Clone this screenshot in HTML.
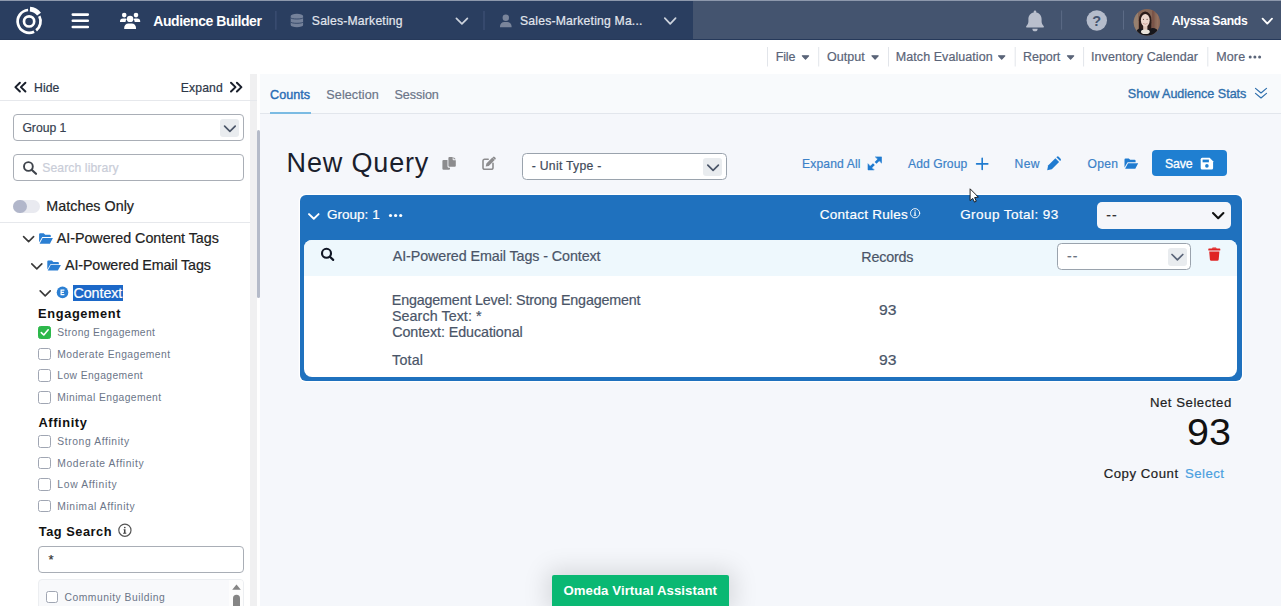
<!DOCTYPE html>
<html><head><meta charset="utf-8">
<style>
*{box-sizing:border-box;margin:0;padding:0}
html,body{width:1281px;height:606px;overflow:hidden;background:#fff;font-family:"Liberation Sans",sans-serif;color:#1f2937}
.a{position:absolute}
.t{position:absolute;white-space:pre;-webkit-text-stroke:0.2px currentColor}
svg{position:absolute;left:0;top:0;overflow:visible}
.cb{position:absolute;width:12.5px;height:12.5px;border:1.1px solid #a0a6b3;border-radius:2.5px;background:#fff}
</style></head><body>
<!-- NAV -->
<div class="a" style="left:0;top:0;width:692.5px;height:40px;background:#2a3e60"></div>
<div class="a" style="left:692.5px;top:0;width:588.5px;height:40px;background:#44546f"></div>
<div class="a" style="left:0;top:0;width:1281px;height:1px;background:#8d98ac"></div>
<div class="a" style="left:0;top:39px;width:1281px;height:1px;background:#26395a"></div>
<!-- MENU BAR -->
<div class="a" style="left:0;top:40px;width:1281px;height:34px;background:#fff"></div>
<!-- SIDEBAR -->
<div class="a" style="left:0;top:74px;width:250px;height:532px;background:#fff"></div>
<div class="a" style="left:250px;top:74px;width:6.5px;height:532px;background:#f0f0f1"></div>
<div class="a" style="left:256.5px;top:74px;width:3.5px;height:532px;background:#fff"></div>
<div class="a" style="left:256.5px;top:129.7px;width:3.5px;height:168.7px;background:#b5bbc9;border-radius:1.5px"></div>
<div class="a" style="left:0;top:100px;width:256.5px;height:1px;background:#e6e8ec"></div>
<div class="a" style="left:0;top:222px;width:250px;height:1px;background:#e6e8ec"></div>
<!-- MAIN BG -->
<div class="a" style="left:260px;top:74px;width:1021px;height:39px;background:#f8fafc"></div>
<div class="a" style="left:260px;top:113px;width:1021px;height:493px;background:#f5f7fb"></div>
<div class="a" style="left:260px;top:112.6px;width:1021px;height:1px;background:#e2e6ec"></div>
<div class="a" style="left:270px;top:112px;width:40.8px;height:2px;background:#7bbbe3"></div>

<!-- sidebar controls -->
<div class="a" style="left:13.2px;top:114.2px;width:230.5px;height:26.8px;border:1px solid #a9aeb6;border-radius:4px;background:#fff"></div>
<div class="a" style="left:220px;top:119px;width:19px;height:17.5px;background:#e9ecef;border-radius:3px"></div>
<div class="a" style="left:13.2px;top:154px;width:230.5px;height:26.8px;border:1px solid #a9aeb6;border-radius:4px;background:#fff"></div>
<div class="a" style="left:13.2px;top:199.9px;width:26.6px;height:13.4px;border-radius:6.7px;background:#e9eaf0"></div>
<div class="a" style="left:13.2px;top:199.9px;width:13.4px;height:13.4px;border-radius:50%;background:#b1b6ca"></div>
<div class="a" style="left:73.3px;top:285px;width:49.4px;height:15.6px;background:#1c68c8"></div>
<!-- checkboxes -->
<div class="cb" style="left:38.4px;top:326px;background:#2db84b;border-color:#2db84b"></div>
<div class="cb" style="left:38.4px;top:347.9px"></div>
<div class="cb" style="left:38.4px;top:369.2px"></div>
<div class="cb" style="left:38.4px;top:391.1px"></div>
<div class="cb" style="left:38.4px;top:435.2px"></div>
<div class="cb" style="left:38.4px;top:456.6px"></div>
<div class="cb" style="left:38.4px;top:478px"></div>
<div class="cb" style="left:38.4px;top:499.8px"></div>
<div class="a" style="left:38.4px;top:546.2px;width:205.4px;height:26.5px;border:1px solid #a9aeb6;border-radius:4px;background:#fff"></div>
<div class="a" style="left:38.4px;top:579.3px;width:205.4px;height:40px;border:1px solid #eceef1;border-radius:4px;background:#f8f9fb;overflow:hidden"><div style="position:absolute;right:0;top:0;width:14px;height:40px;background:#fdfdfd"></div></div>
<div class="cb" style="left:45.9px;top:590.9px"></div>

<!-- main controls -->
<div class="a" style="left:522.2px;top:153.1px;width:204.6px;height:26.8px;border:1px solid #9aa3ad;border-radius:4.5px;background:#fff"></div>
<div class="a" style="left:703px;top:157.8px;width:19.3px;height:17.8px;background:#e9ecef;border-radius:3px"></div>
<div class="a" style="left:1151.7px;top:150.3px;width:75.8px;height:26.2px;background:#1f7fd1;border-radius:4px"></div>
<!-- group panel -->
<div class="a" style="left:299.8px;top:195.3px;width:942.4px;height:185.3px;background:#1f71be;border-radius:6px;box-shadow:0 0 0 1.3px #fff"></div>
<div class="a" style="left:304.3px;top:240px;width:933.2px;height:136.5px;background:#fff;border-radius:8px;overflow:hidden"><div style="height:35.8px;background:#eef8fd"></div></div>
<div class="a" style="left:1097.2px;top:202px;width:134px;height:26.6px;background:#f5f6fa;border-radius:5px"></div>
<div class="a" style="left:1057.2px;top:243.2px;width:134px;height:26.7px;border:1px solid #9aa3ad;border-radius:4.5px;background:#fff"></div>
<div class="a" style="left:1167.6px;top:247.5px;width:19.2px;height:18.4px;background:#e9ecef;border-radius:3px"></div>
<!-- green button -->
<div class="a" style="left:552.2px;top:575px;width:176.7px;height:31px;background:#0ab873;border-radius:2px 2px 0 0;box-shadow:0 0 24px 5px rgba(0,0,0,.13)"></div>

<svg width="1281" height="606" viewBox="0 0 1281 606" fill="none" stroke-linecap="round" stroke-linejoin="round">
<!-- nav separators -->
<g stroke="#43557a" stroke-width="1" stroke-linecap="butt"><path d="M275.9,11V29.7M484,10.9V30"/></g>
<g stroke="#5c6b86" stroke-width="1" stroke-linecap="butt"><path d="M1061.6,10.5V29.6M1123.5,10.5V29.6"/></g>
<!-- logo -->
<g stroke="#fff" stroke-linecap="butt">
<circle cx="29.1" cy="21.4" r="5.1" stroke-width="2.65"/>
<path d="M34.12,31.69 A11.45,11.45 0 1 1 28.10,9.99" stroke-width="2.7"/>
<path d="M39.30,16.20 A11.45,11.45 0 0 1 36.15,30.42" stroke-width="2.7"/>
<path d="M29.96,9.13 A12.3,12.3 0 0 1 39.05,14.17" stroke-width="4.7"/>
</g>
<!-- hamburger -->
<path d="M72.8,14.6H87.8M72.8,20.8H87.8M72.8,27H87.8" stroke="#fff" stroke-width="2.6"/>
<!-- users -->
<g fill="#fff" stroke="none">
<circle cx="130.1" cy="18.9" r="3.2"/>
<path d="M124.2,28.9v-1.2a4.2,4.2 0 0 1 4.2,-4.3h3.4a4.2,4.2 0 0 1 4.2,4.3v1.2z"/>
<circle cx="124.2" cy="15.1" r="2.3"/><circle cx="136" cy="15.1" r="2.3"/>
<path d="M120,21.9v-0.6a2.9,2.9 0 0 1 2.9,-2.9h2.4a2.9,2.9 0 0 1 1.6,0.5a4.6,4.6 0 0 0 -1.4,3z"/>
<path d="M140.2,21.9v-0.6a2.9,2.9 0 0 0 -2.9,-2.9h-2.4a2.9,2.9 0 0 0 -1.6,0.5a4.6,4.6 0 0 1 1.4,3z"/>
</g>
<!-- db icon -->
<path d="M290.7,16.1v8.8a6.2,2.4 0 0 0 12.4,0v-8.8a6.2,2.4 0 0 0 -12.4,0z" fill="#74819a" stroke="none"/>
<path d="M290.7,17.7a6.2,1.3 0 0 0 12.4,0M290.7,22a6.2,1.3 0 0 0 12.4,0" stroke="#2a3e60" stroke-width="0.8" stroke-linecap="butt"/>
<!-- nav chevrons -->
<g stroke="#cdd3dd" stroke-width="1.7">
<path d="M456.4,18.4L461.9,23.9L467.4,18.4"/>
<path d="M664.8,18.2L670.2,23.8L675.6,18.2"/>
</g>
<path d="M1262.6,18.6L1267.3,23.6L1272,18.6" stroke="#fff" stroke-width="1.8"/>
<!-- user icon -->
<g fill="#7a859b" stroke="none"><circle cx="505.8" cy="17.8" r="3.2"/>
<path d="M500,27.2v-1a4.3,4.3 0 0 1 4.3,-4.3h3a4.3,4.3 0 0 1 4.3,4.3v1z"/></g>
<!-- bell -->
<g fill="#b9bfcd" stroke="none" transform="translate(0,0.5)">
<path d="M1035,10a1.3,1.3 0 0 1 1.3,1.3v0.8c3.2,0.6 5.3,3.3 5.3,6.6v2.4c0,1.8 0.9,3.2 2,4.3c0.6,0.6 0.3,1.7 -0.7,1.7h-15.8c-1,0 -1.3,-1.1 -0.7,-1.7c1.1,-1.1 2,-2.5 2,-4.3v-2.4c0,-3.3 2.1,-6 5.3,-6.6v-0.8a1.3,1.3 0 0 1 1.3,-1.3z"/>
<path d="M1032.4,28.2h5.2a2.6,2.6 0 0 1 -5.2,0z"/>
</g>
<!-- help -->
<circle cx="1096.8" cy="20.5" r="10.2" fill="#b5bccb" stroke="none"/>
<text x="1096.8" y="25.6" text-anchor="middle" font-family="Liberation Sans" font-weight="700" font-size="14.5" fill="#44546f" stroke="none">?</text>
<!-- avatar -->
<clipPath id="av"><circle cx="1146.9" cy="22.3" r="13.2"/></clipPath>
<g clip-path="url(#av)" stroke="none">
<rect x="1133" y="8" width="28" height="29" fill="#876757"/>
<rect x="1133" y="8" width="5" height="29" fill="#96806f"/>
<rect x="1152" y="8" width="2.5" height="29" fill="#7a5448"/>
<rect x="1156.5" y="8" width="2" height="29" fill="#94705f"/>
<ellipse cx="1145.2" cy="20.2" rx="6.3" ry="8.8" fill="#2a1b19"/>
<rect x="1139" y="20" width="12.4" height="10.5" rx="2" fill="#2a1b19"/>
<path d="M1135,37L1137,30Q1140,27.8 1141.5,29H1150Q1152.5,26.8 1157,29.5L1160,37z" fill="#17171c"/>
<rect x="1143.2" y="25" width="4.2" height="6" fill="#dcc3b8"/>
<ellipse cx="1145.4" cy="31.8" rx="4.4" ry="2.3" fill="#e9e3da"/>
<ellipse cx="1145.3" cy="20.2" rx="4.4" ry="6.3" fill="#ecd6cc"/>
<path d="M1143.3,23.6Q1145.3,25.2 1147.3,23.6" stroke="#c48f88" stroke-width="0.7" fill="none"/>
<circle cx="1143.5" cy="19.3" r="0.6" fill="#5a4038"/><circle cx="1147.1" cy="19.3" r="0.6" fill="#5a4038"/>
</g>
<!-- menu separators -->
<path d="M767.5,47V66.5M818.7,47V66.5M888.5,47V66.5M1015.2,47V66.5M1083.6,47V66.5M1207.8,47V66.5" stroke="#e2e5ea" stroke-width="1" stroke-linecap="butt"/>
<!-- menu carets -->
<g fill="#5a6478" stroke="#5a6478" stroke-width="1.2">
<path d="M802.4,55.8h6.2l-3.1,3.4z"/><path d="M872,55.8h6.2l-3.1,3.4z"/><path d="M998.6,55.8h6.2l-3.1,3.4z"/><path d="M1067.5,55.8h6.2l-3.1,3.4z"/>
</g>
<g fill="#5a6478" stroke="none"><circle cx="1250.2" cy="57" r="1.5"/><circle cx="1254.9" cy="57" r="1.5"/><circle cx="1259.6" cy="57" r="1.5"/></g>
<!-- double chevron -->
<path d="M1255.5,88.4L1261,93L1266.5,88.4M1255.5,93.4L1261,98L1266.5,93.4" stroke="#2f6fad" stroke-width="1.2"/>
<!-- hide / expand -->
<path d="M19.9,82.7L15.4,87.1L19.9,91.5M25.4,82.7L20.9,87.1L25.4,91.5M231,82.7L235.5,87.1L231,91.5M236.9,82.7L241.4,87.1L236.9,91.5" stroke="#1a202c" stroke-width="2"/>
<!-- select chevrons -->
<path d="M224.6,126.2L229.9,131.3L235.2,126.2" stroke="#4a5568" stroke-width="1.7"/>
<path d="M707.8,165.2L713.1,170.4L718.4,165.2" stroke="#4a5568" stroke-width="1.7"/>
<path d="M1172,254.5L1177.4,259.8L1182.8,254.5" stroke="#5a6478" stroke-width="1.7"/>
<path d="M1213,213L1218.2,218.2L1223.4,213" stroke="#111" stroke-width="2.1"/>
<!-- sidebar search -->
<circle cx="28.4" cy="166.5" r="4.4" stroke="#3f444c" stroke-width="1.9"/><path d="M31.9,170L36,173.8" stroke="#3f444c" stroke-width="2.2"/>
<!-- tree chevrons -->
<path d="M23.6,236.6L28.6,241.6L33.6,236.6M31.8,263.9L36.8,268.9L41.8,263.9M40.2,290.9L45.2,295.9L50.2,290.9" stroke="#3a3a3a" stroke-width="1.6"/>
<!-- folders -->
<g fill="#2b7fd3" stroke="none">
<path d="M39.1,242.6v-8.3a1,1 0 0 1 1,-1h3.6l1.5,1.5h4.6a1,1 0 0 1 1,1v1.3h-8.6l-3.1,5.5z"/>
<path d="M42.6,238h10.3l-3,5.7h-10.3z"/>
<path d="M47.3,269.6v-8.2a1,1 0 0 1 1,-1h3.6l1.5,1.5h4.5a1,1 0 0 1 1,1v1.3h-8.5l-3.1,5.4z"/>
<path d="M50.7,265h10.2l-3,5.6h-10.2z"/>
</g>
<!-- E icon -->
<circle cx="62.5" cy="292.4" r="5.8" fill="#2b7fd3" stroke="none"/>
<path d="M64.4,290.2h-3.3v4.5h3.3M61.1,292.4h2.8" stroke="#fff" stroke-width="1.2" stroke-linecap="butt" stroke-linejoin="miter"/>
<!-- check -->
<path d="M41.3,332.6L43.8,335L48.2,329.8" stroke="#fff" stroke-width="1.6"/>
<!-- info (tag search) -->
<circle cx="124.9" cy="530.2" r="6.1" stroke="#555" stroke-width="1.2"/>
<g fill="#444" stroke="none"><circle cx="124.8" cy="527.5" r="0.85"/><path d="M123.6,529.3h1.9v3.5h0.8v0.9h-3.2v-0.9h0.9v-2.6h-0.4z"/></g>
<!-- list scrollbar -->
<g fill="#858585" stroke="none"><path d="M232.2,589.7L236.5,584.6L240.8,589.7z"/><rect x="233" y="594.8" width="7" height="14" rx="3.5"/></g>
<!-- copy icon -->
<g stroke="none">
<rect x="442.4" y="160" width="7.6" height="9.8" rx="1.1" fill="#8c8c8e"/>
<path d="M447.5,157.2a1.1,1.1 0 0 1 1.1,-1.1h4.9l3.2,3.2v7.3a1.1,1.1 0 0 1 -1.1,1.1h-7a1.1,1.1 0 0 1 -1.1,-1.1z" fill="#f5f7fb"/>
<path d="M448.4,158a1,1 0 0 1 1,-1h3.3v2.4a0.8,0.8 0 0 0 0.8,0.8h2.3v5.5a1,1 0 0 1 -1,1h-5.4a1,1 0 0 1 -1,-1z" fill="#8c8c8e"/>
<path d="M453.5,157l2.3,2.3h-2.3z" fill="#8c8c8e"/>
</g>
<!-- edit icon -->
<path d="M488.2,159.3h-3.6a1.6,1.6 0 0 0 -1.6,1.6v6.8a1.6,1.6 0 0 0 1.6,1.6h6.8a1.6,1.6 0 0 0 1.6,-1.6v-4.4" stroke="#8c8c8e" stroke-width="1.6"/>
<path d="M485.7,166.6l0.7,-3.1l5.9,-5.9l2.4,2.4l-5.9,5.9zM493.1,156.9a1.1,1.1 0 0 1 1.5,0l0.9,0.9a1.1,1.1 0 0 1 0,1.5l-0.5,0.5l-2.4,-2.4z" fill="#8c8c8e" stroke="none"/>
<!-- expand icon -->
<g fill="#1f7bd0" stroke="#1f7bd0" stroke-width="0.6"><path d="M875.7,156.9h5.8v5.8zM868,164.1v5.8h5.8z"/></g>
<path d="M879.6,158.8L875.6,162.8M869.9,168.1L873.9,164.1" stroke="#1f7bd0" stroke-width="2.6" stroke-linecap="butt"/>
<!-- plus -->
<path d="M976.6,163.9H987.8M982.2,158.3V169.5" stroke="#1f7bd0" stroke-width="1.6"/>
<!-- pencil -->
<g fill="#1f7bd0" stroke="none">
<path d="M1047.2,170.2l0.9,-4.6l7.3,-7.3l3.7,3.7l-7.3,7.3z"/>
<path d="M1056.4,157.3l0.5,-0.5a1.3,1.3 0 0 1 1.8,0l1.9,1.9a1.3,1.3 0 0 1 0,1.8l-0.5,0.5z"/>
</g>
<!-- folder open toolbar -->
<g fill="#1f7bd0" stroke="none">
<path d="M1124.5,167v-7.6a1,1 0 0 1 1,-1h3.3l1.4,1.4h4.4a1,1 0 0 1 1,1v1.4h-8l-3.1,5.4z"/>
<path d="M1128,163.2h10.2l-2.9,5.5h-10.2z"/>
</g>
<!-- save icon -->
<path d="M1202.2,157.8h7.4l3.5,3.5v6.8a1.5,1.5 0 0 1 -1.5,1.5h-9.4a1.5,1.5 0 0 1 -1.5,-1.5v-8.8a1.5,1.5 0 0 1 1.5,-1.5z" fill="#fff" stroke="none"/>
<rect x="1202.6" y="159.6" width="6.3" height="2.7" fill="#1f7fd1" stroke="none"/><circle cx="1206.9" cy="165.9" r="1.8" fill="#1f7fd1" stroke="none"/>
<!-- group chevron/dots/info -->
<path d="M309,214.1L313.8,218.8L318.6,214.1" stroke="#fff" stroke-width="1.9"/>
<g fill="#fff" stroke="none"><circle cx="390.5" cy="215.5" r="1.6"/><circle cx="395.6" cy="215.5" r="1.6"/><circle cx="400.7" cy="215.5" r="1.6"/></g>
<circle cx="915.1" cy="213.2" r="4.6" stroke="#fff" stroke-width="0.9"/>
<g fill="#fff" stroke="none"><circle cx="915.1" cy="211" r="0.7"/><path d="M914.2,212.3h1.5v2.8h0.6v0.7h-2.6v-0.7h0.7v-2.1h-0.2z"/></g>
<!-- table search -->
<circle cx="326.5" cy="253.3" r="4.5" stroke="#101624" stroke-width="2.1"/><path d="M329.9,256.7L333.2,259.9" stroke="#101624" stroke-width="2.2"/>
<!-- trash -->
<g fill="#e02424" stroke="none">
<rect x="1208.3" y="248.6" width="12" height="1.9" rx="0.6"/><path d="M1211.8,248.8l0.8,-1.3h3.4l0.8,1.3z"/>
<path d="M1209.2,251.5h10.2l-0.7,8a1.4,1.4 0 0 1 -1.4,1.3h-6a1.4,1.4 0 0 1 -1.4,-1.3z"/>
</g>
<!-- cursor -->
<path d="M970.1,189.2V200.7L972.7,198.4L974.5,202.1L976.3,201.2L974.6,197.6L978,197.2z" fill="#fff" stroke="#111" stroke-width="0.9" stroke-linejoin="miter"/>
</svg>
<div class="t" style="left:153.33px;top:13.93px;font-size:14px;line-height:14px;color:#fff;letter-spacing:-0.438px;font-weight:700;-webkit-text-stroke:0;">Audience Builder</div>
<div class="t" style="left:311.84px;top:14.64px;font-size:12.2px;line-height:12.2px;color:#e2e6ee;letter-spacing:0.192px;">Sales-Marketing</div>
<div class="t" style="left:520.05px;top:14.64px;font-size:12.2px;line-height:12.2px;color:#e2e6ee;letter-spacing:0.192px;">Sales-Marketing Ma...</div>
<div class="t" style="left:1171.75px;top:14.84px;font-size:12.2px;line-height:12.2px;color:#fff;letter-spacing:-0.295px;font-weight:700;-webkit-text-stroke:0;">Alyssa Sands</div>
<div class="t" style="left:775.76px;top:50.79px;font-size:12.5px;line-height:12.5px;color:#5a6478;letter-spacing:-0.165px;">File</div>
<div class="t" style="left:827.10px;top:50.79px;font-size:12.5px;line-height:12.5px;color:#5a6478;letter-spacing:0.010px;">Output</div>
<div class="t" style="left:895.78px;top:50.79px;font-size:12.5px;line-height:12.5px;color:#5a6478;letter-spacing:0.068px;">Match Evaluation</div>
<div class="t" style="left:1022.99px;top:50.79px;font-size:12.5px;line-height:12.5px;color:#5a6478;letter-spacing:-0.043px;">Report</div>
<div class="t" style="left:1091.00px;top:50.79px;font-size:12.5px;line-height:12.5px;color:#5a6478;letter-spacing:0.074px;">Inventory Calendar</div>
<div class="t" style="left:1216.14px;top:50.79px;font-size:12.5px;line-height:12.5px;color:#5a6478;letter-spacing:0.177px;">More</div>
<div class="t" style="left:270.03px;top:88.94px;font-size:12.6px;line-height:12.6px;color:#2a6db5;letter-spacing:0.037px;-webkit-text-stroke:0.4px #2a6db5;">Counts</div>
<div class="t" style="left:326.30px;top:88.94px;font-size:12.6px;line-height:12.6px;color:#6b7588;letter-spacing:0.090px;">Selection</div>
<div class="t" style="left:394.41px;top:88.94px;font-size:12.6px;line-height:12.6px;color:#6b7588;letter-spacing:-0.065px;">Session</div>
<div class="t" style="left:1127.84px;top:87.54px;font-size:12.6px;line-height:12.6px;color:#2f6fad;letter-spacing:-0.026px;-webkit-text-stroke:0.35px #2f6fad;">Show Audience Stats</div>
<div class="t" style="left:33.98px;top:81.84px;font-size:12.2px;line-height:12.2px;color:#2d3748;letter-spacing:0.105px;">Hide</div>
<div class="t" style="left:180.81px;top:81.84px;font-size:12.2px;line-height:12.2px;color:#2d3748;letter-spacing:0.133px;">Expand</div>
<div class="t" style="left:22.38px;top:121.74px;font-size:12.2px;line-height:12.2px;color:#374151;letter-spacing:-0.008px;">Group 1</div>
<div class="t" style="left:42.17px;top:161.64px;font-size:12.2px;line-height:12.2px;color:#c9cdd8;letter-spacing:0.101px;">Search library</div>
<div class="t" style="left:46.34px;top:198.58px;font-size:14.3px;line-height:14.3px;color:#222;letter-spacing:0.023px;">Matches Only</div>
<div class="t" style="left:56.70px;top:230.88px;font-size:14.3px;line-height:14.3px;color:#222;letter-spacing:-0.023px;">AI-Powered Content Tags</div>
<div class="t" style="left:65.06px;top:257.78px;font-size:14.3px;line-height:14.3px;color:#222;letter-spacing:-0.126px;">AI-Powered Email Tags</div>
<div class="t" style="left:73.50px;top:285.68px;font-size:14.3px;line-height:14.3px;color:#fff;letter-spacing:-0.080px;">Context</div>
<div class="t" style="left:38.12px;top:307.54px;font-size:12.8px;line-height:12.8px;color:#111;letter-spacing:0.626px;font-weight:700;-webkit-text-stroke:0;">Engagement</div>
<div class="t" style="left:57.25px;top:327.50px;font-size:10.3px;line-height:10.3px;color:#6b7588;letter-spacing:0.382px;-webkit-text-stroke:0;">Strong Engagement</div>
<div class="t" style="left:57.32px;top:349.50px;font-size:10.3px;line-height:10.3px;color:#6b7588;letter-spacing:0.444px;-webkit-text-stroke:0;">Moderate Engagement</div>
<div class="t" style="left:57.33px;top:370.80px;font-size:10.3px;line-height:10.3px;color:#6b7588;letter-spacing:0.404px;-webkit-text-stroke:0;">Low Engagement</div>
<div class="t" style="left:57.32px;top:392.70px;font-size:10.3px;line-height:10.3px;color:#6b7588;letter-spacing:0.414px;-webkit-text-stroke:0;">Minimal Engagement</div>
<div class="t" style="left:38.52px;top:416.84px;font-size:12.8px;line-height:12.8px;color:#111;letter-spacing:0.606px;font-weight:700;-webkit-text-stroke:0;">Affinity</div>
<div class="t" style="left:57.25px;top:436.80px;font-size:10.3px;line-height:10.3px;color:#6b7588;letter-spacing:0.618px;-webkit-text-stroke:0;">Strong Affinity</div>
<div class="t" style="left:57.32px;top:458.70px;font-size:10.3px;line-height:10.3px;color:#6b7588;letter-spacing:0.612px;-webkit-text-stroke:0;">Moderate Affinity</div>
<div class="t" style="left:57.33px;top:479.60px;font-size:10.3px;line-height:10.3px;color:#6b7588;letter-spacing:0.672px;-webkit-text-stroke:0;">Low Affinity</div>
<div class="t" style="left:57.32px;top:501.90px;font-size:10.3px;line-height:10.3px;color:#6b7588;letter-spacing:0.588px;-webkit-text-stroke:0;">Minimal Affinity</div>
<div class="t" style="left:38.84px;top:525.74px;font-size:12.8px;line-height:12.8px;color:#111;letter-spacing:0.519px;font-weight:700;-webkit-text-stroke:0;">Tag Search</div>
<div class="t" style="left:48.60px;top:553.43px;font-size:13px;line-height:13px;color:#333;letter-spacing:0.000px;">*</div>
<div class="t" style="left:64.57px;top:592.50px;font-size:10.3px;line-height:10.3px;color:#6b7588;letter-spacing:0.510px;-webkit-text-stroke:0;">Community Building</div>
<div class="t" style="left:286.60px;top:149.56px;font-size:27px;line-height:27px;color:#1a202c;letter-spacing:0.837px;-webkit-text-stroke:0;">New Query</div>
<div class="t" style="left:531.72px;top:160.24px;font-size:12.2px;line-height:12.2px;color:#3f4a5a;letter-spacing:0.290px;">- Unit Type -</div>
<div class="t" style="left:802.04px;top:157.69px;font-size:12.1px;line-height:12.1px;color:#3c82c8;letter-spacing:0.149px;">Expand All</div>
<div class="t" style="left:908.11px;top:157.69px;font-size:12.1px;line-height:12.1px;color:#3c82c8;letter-spacing:0.075px;">Add Group</div>
<div class="t" style="left:1014.62px;top:157.69px;font-size:12.1px;line-height:12.1px;color:#3c82c8;letter-spacing:0.340px;">New</div>
<div class="t" style="left:1087.50px;top:157.69px;font-size:12.1px;line-height:12.1px;color:#3c82c8;letter-spacing:0.301px;">Open</div>
<div class="t" style="left:1165.07px;top:157.59px;font-size:12.3px;line-height:12.3px;color:#fff;letter-spacing:-0.190px;-webkit-text-stroke:0.3px #fff;">Save</div>
<div class="t" style="left:327.01px;top:207.68px;font-size:13.5px;line-height:13.5px;color:#fff;letter-spacing:0.018px;-webkit-text-stroke:0.2px #fff;">Group: 1</div>
<div class="t" style="left:819.80px;top:207.68px;font-size:13.5px;line-height:13.5px;color:#fff;letter-spacing:0.267px;-webkit-text-stroke:0.2px #fff;">Contact Rules</div>
<div class="t" style="left:960.19px;top:207.68px;font-size:13.5px;line-height:13.5px;color:#fff;letter-spacing:0.426px;-webkit-text-stroke:0.2px #fff;">Group Total: 93</div>
<div class="t" style="left:1106.25px;top:208.13px;font-size:14px;line-height:14px;color:#333;letter-spacing:1.153px;">--</div>
<div class="t" style="left:392.73px;top:248.78px;font-size:14.3px;line-height:14.3px;color:#4a5568;letter-spacing:-0.081px;">AI-Powered Email Tags - Context</div>
<div class="t" style="left:861.37px;top:249.88px;font-size:14.3px;line-height:14.3px;color:#4a5568;letter-spacing:-0.198px;">Records</div>
<div class="t" style="left:1067.04px;top:249.43px;font-size:14px;line-height:14px;color:#6b7280;letter-spacing:0.977px;">--</div>
<div class="t" style="left:391.84px;top:292.98px;font-size:14.3px;line-height:14.3px;color:#4a5568;letter-spacing:-0.166px;">Engagement Level: Strong Engagement</div>
<div class="t" style="left:392.01px;top:308.98px;font-size:14.3px;line-height:14.3px;color:#4a5568;letter-spacing:0.060px;">Search Text: *</div>
<div class="t" style="left:392.18px;top:324.78px;font-size:14.3px;line-height:14.3px;color:#4a5568;letter-spacing:-0.075px;">Context: Educational</div>
<div class="t" style="left:879.01px;top:302.58px;font-size:14.3px;line-height:14.3px;color:#4a5568;letter-spacing:0.000px;transform:scaleX(1.0953);transform-origin:0 50%;">93</div>
<div class="t" style="left:392.10px;top:352.88px;font-size:14.3px;line-height:14.3px;color:#4a5568;letter-spacing:0.171px;">Total</div>
<div class="t" style="left:879.01px;top:352.78px;font-size:14.3px;line-height:14.3px;color:#4a5568;letter-spacing:0.000px;transform:scaleX(1.0953);transform-origin:0 50%;">93</div>
<div class="t" style="left:1149.93px;top:395.93px;font-size:13.2px;line-height:13.2px;color:#222;letter-spacing:0.528px;">Net Selected</div>
<div class="t" style="left:1187.42px;top:414.62px;font-size:36.8px;line-height:36.8px;color:#111;letter-spacing:0.000px;transform:scaleX(1.0737);transform-origin:0 50%;-webkit-text-stroke:0;">93</div>
<div class="t" style="left:1103.65px;top:466.83px;font-size:13.2px;line-height:13.2px;color:#222;letter-spacing:0.537px;">Copy Count</div>
<div class="t" style="left:1185.03px;top:466.83px;font-size:13.2px;line-height:13.2px;color:#4a9fe0;letter-spacing:0.459px;">Select</div>
<div class="t" style="left:563.39px;top:583.73px;font-size:13.2px;line-height:13.2px;color:#fff;letter-spacing:0.085px;font-weight:700;-webkit-text-stroke:0;">Omeda Virtual Assistant</div>
</body></html>
